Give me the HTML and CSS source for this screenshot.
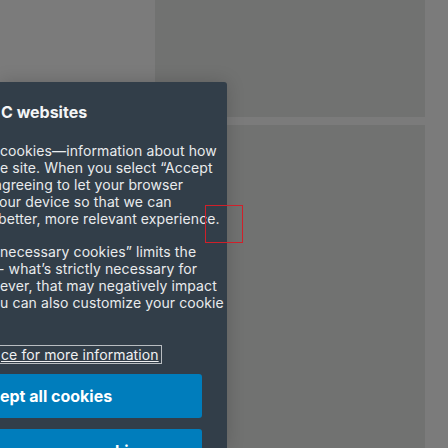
FILE: index.html
```html
<!DOCTYPE html>
<html>
<head>
<meta charset="utf-8">
<link rel="stylesheet" href="styles.css">
</head>
<body>
<div class="page">
  <div class="panel panel-top"></div>
  <div class="panel panel-bottom"></div>
</div>
<div class="dialog">
  <h2 class="title">C websites</h2>
  <div class="para">
    <div class="line">cookies—information about how</div>
    <div class="line">e site. When you select “Accept</div>
    <div class="line cut-a">agreeing to let your browser</div>
    <div class="line cut-o">our device so that we can</div>
    <div class="line cut-b">better, more relevant experience.</div>
  </div>
  <div class="para">
    <div class="line">necessary cookies” limits the</div>
    <div class="line cut-dash">- what’s strictly necessary for</div>
    <div class="line">ever, that may negatively impact</div>
    <div class="line">u can also customize your cookie</div>
    <div class="line">&nbsp;</div>
  </div>
  <a class="more" href="#">ce for more information</a>
  <button class="btn">ept all cookies</button>
  <button class="btn">necessary cookies</button>
</div>
<div class="focus-ring"></div>
</body>
</html>
```

FILE: styles.css
```css
html, body {
  margin: 0;
  padding: 0;
}
body {
  width: 448px;
  height: 448px;
  overflow: hidden;
  background: #7b7b7b;
  font-family: Inter, "Noto Sans", sans-serif;
  position: relative;
}
.page {
  display: flex;
  flex-direction: column;
  gap: 8px;
  padding-left: 155px;
  width: 270px;
}
.panel {
  background: #717271;
}
.panel-top {
  height: 117px;
}
.panel-bottom {
  height: 323px;
}
.dialog {
  position: absolute;
  left: 0;
  top: 82px;
  width: 202px;
  height: 346px;
  padding: 20px 25px 0 0;
  background: #323e49;
  border-top-right-radius: 3px;
  box-shadow: 0 0 18px rgba(0, 0, 0, 0.18);
  overflow: hidden;
  color: #e9ebed;
}
.title {
  margin: 0 0 20px 1px;
  font-size: 16px;
  line-height: 20px;
  font-weight: 700;
  color: #f4f5f6;
  white-space: nowrap;
}
.para {
  margin-bottom: 16px;
  font-size: 14px;
  line-height: 17px;
  letter-spacing: 0.1px;
}
.line {
  white-space: nowrap;
}
.cut-a {
  margin-left: -6px;
}
.cut-o {
  margin-left: -1px;
}
.cut-b {
  margin-left: -2px;
}
.cut-dash {
  margin-left: -2px;
}
.more {
  display: inline-block;
  margin-left: -2px;
  padding: 0 2px;
  border: 1px solid #b9bdc1;
  font-size: 14px;
  line-height: 17px;
  letter-spacing: 0.1px;
  color: #f0f1f2;
  text-decoration: underline;
  white-space: nowrap;
}
.btn {
  display: block;
  width: 202px;
  height: 44px;
  margin-top: 10px;
  padding: 0;
  border: none;
  border-radius: 0 3px 3px 0;
  background: #007dbc;
  color: #ffffff;
  font-family: Inter, "Noto Sans", sans-serif;
  font-size: 16px;
  font-weight: 700;
  text-align: left;
  white-space: nowrap;
}
.btn + .btn {
  margin-top: 11px;
}
.focus-ring {
  position: absolute;
  left: 205px;
  top: 205px;
  width: 36px;
  height: 36px;
  border: 1px solid #d0202a;
}
```
